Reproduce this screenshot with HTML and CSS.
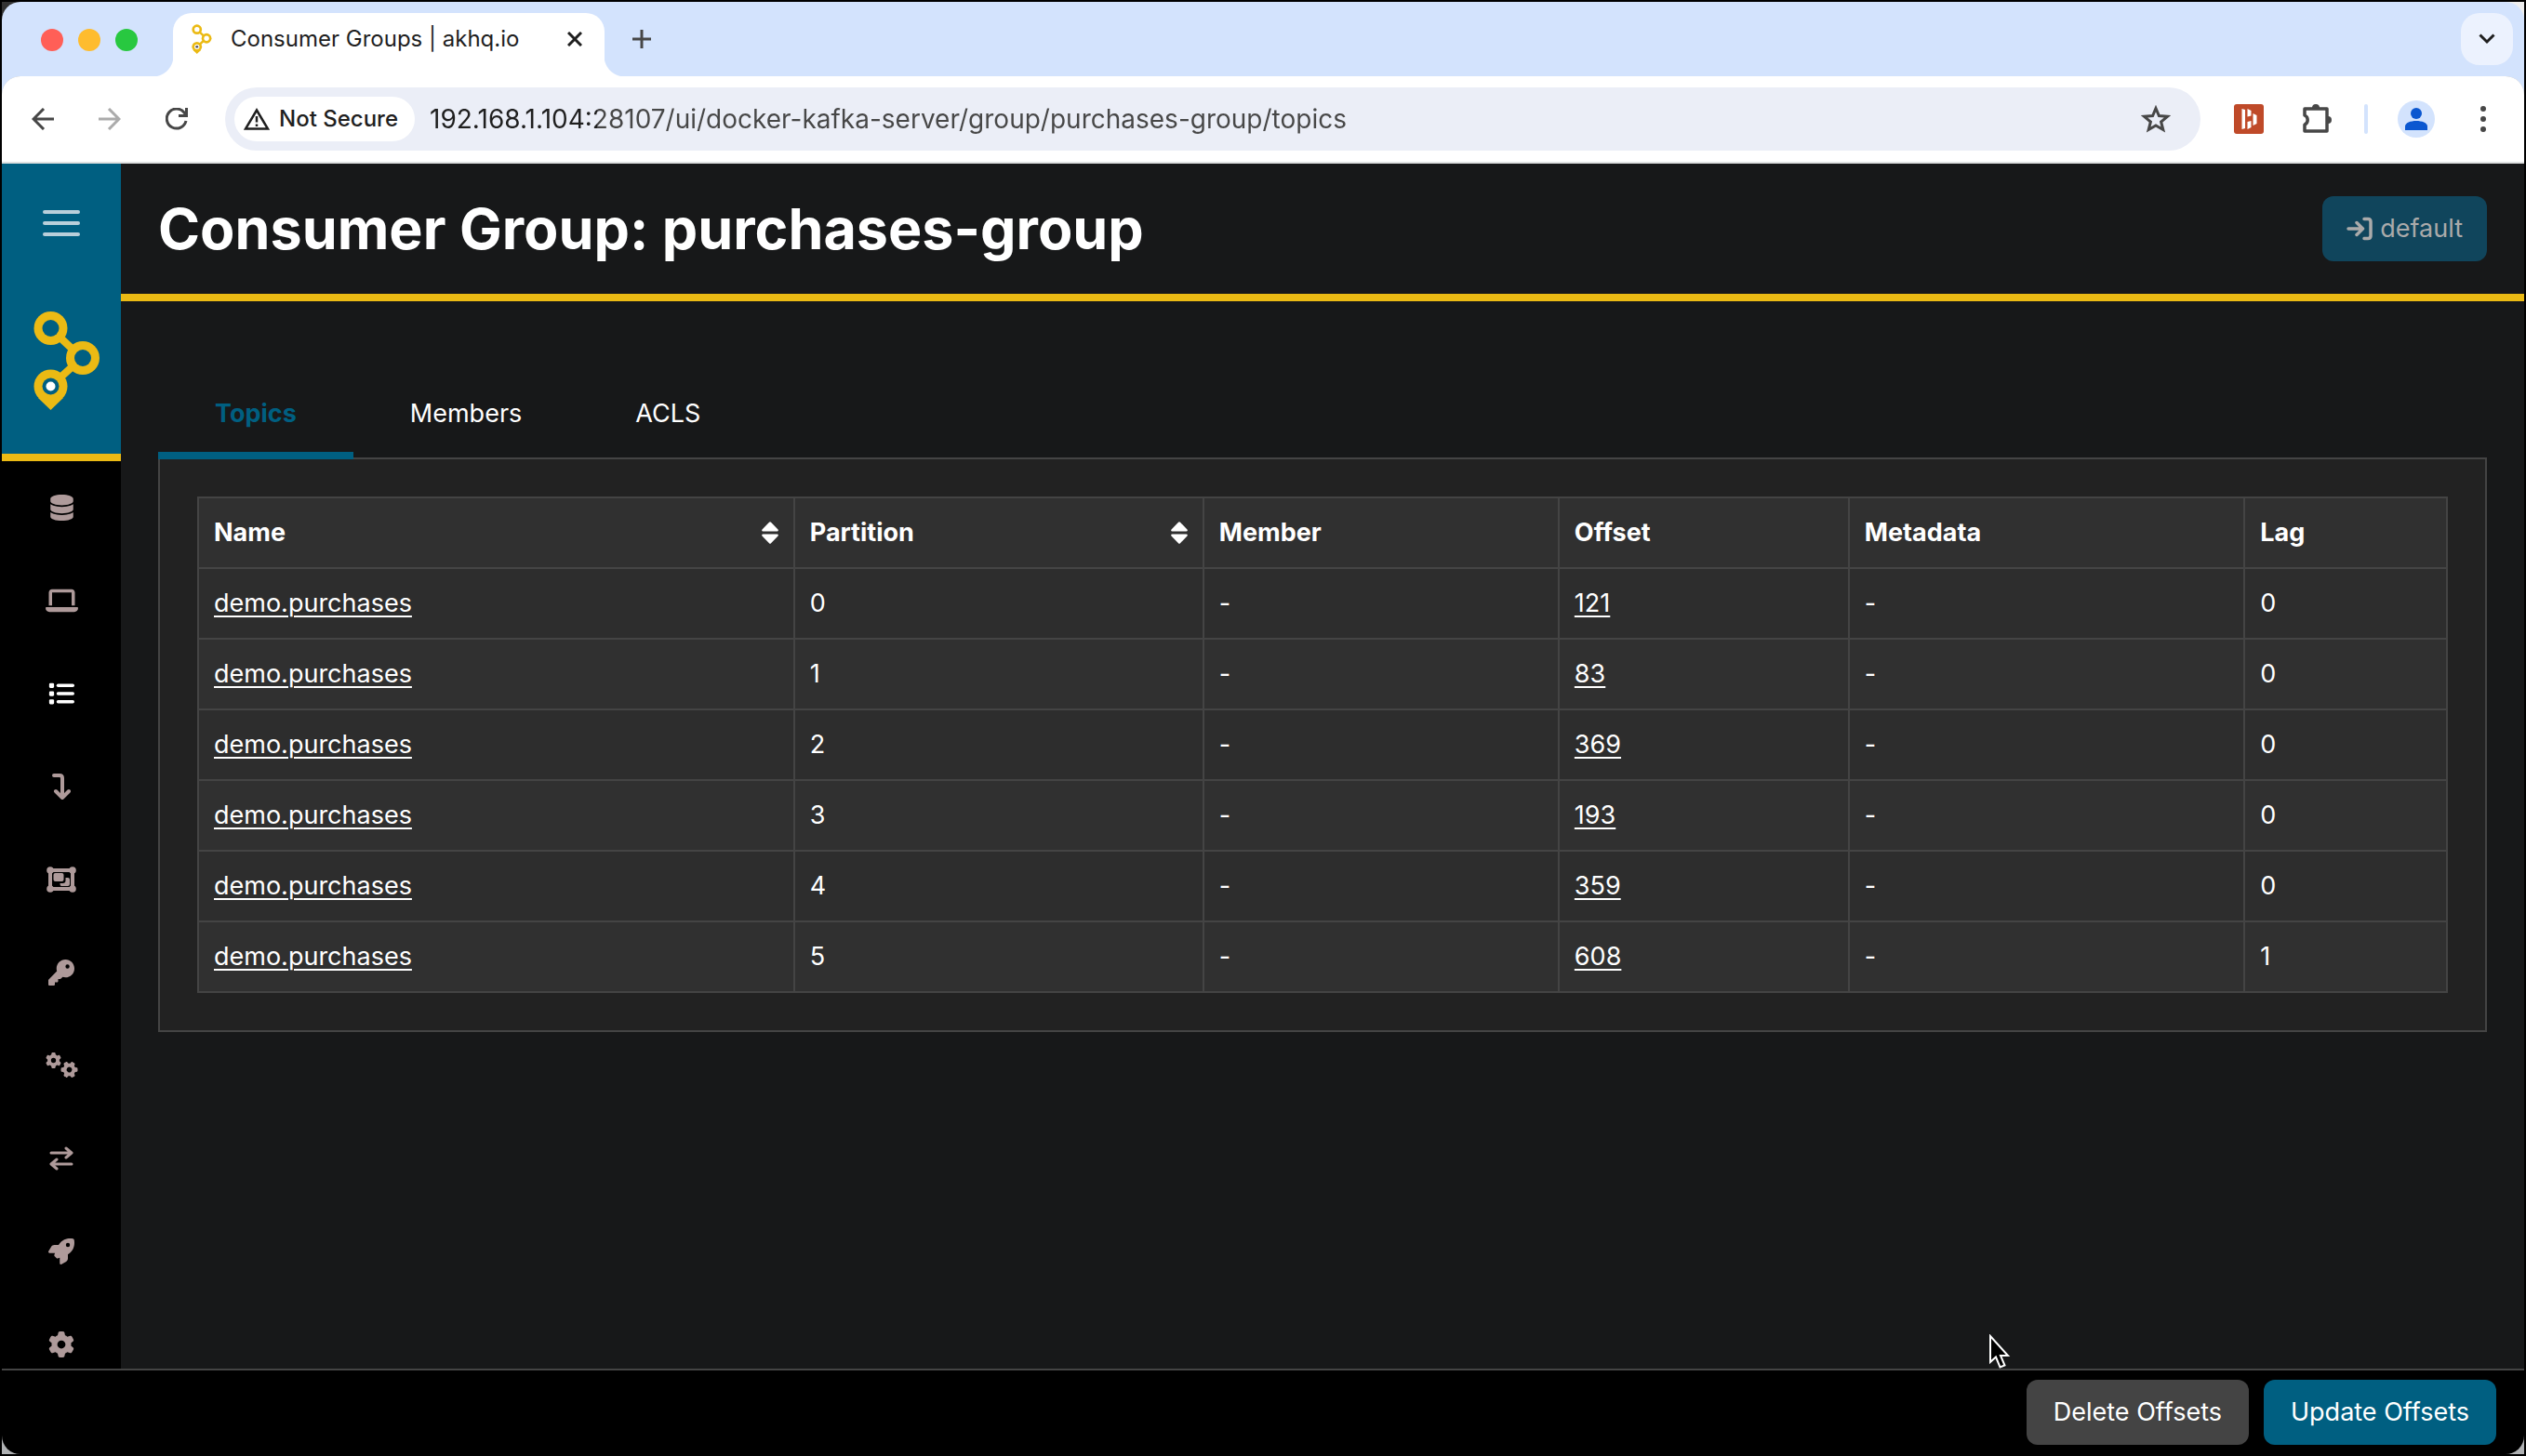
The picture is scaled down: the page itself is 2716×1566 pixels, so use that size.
FILE: index.html
```html
<!DOCTYPE html>
<html lang="en">
<head>
<meta charset="utf-8">
<title>Consumer Groups | akhq.io</title>
<link rel="stylesheet" href="styles.css">
</head>
<body>
<svg class="defs" width="0" height="0" aria-hidden="true">
  <symbol id="logo" viewBox="36 333 72 107">
    <path d="M54 352 88 384 54 415" fill="none" stroke="#ebba14" stroke-width="8"/>
    <path d="M41 427 54.500 440 68 427Z" fill="#ebba14"/>
    <g fill="#ebba14"><circle cx="54.500" cy="352" r="18"/><circle cx="89" cy="384" r="18"/><circle cx="54.500" cy="414.500" r="18"/></g>
    <g class="hole"><circle cx="54.500" cy="352" r="9"/><circle cx="89" cy="384" r="9"/><circle cx="54.500" cy="414.500" r="9"/></g>
    <circle class="dot" cx="54.500" cy="414.500" r="5"/>
  </symbol>
  <symbol id="gear" viewBox="0 0 512 512"><path d="M495.9 166.6c3.2 8.7 .5 18.4-6.4 24.6l-43.3 39.4c1.1 8.3 1.7 16.8 1.700 25.4s-.6 17.1-1.700 25.4l43.3 39.4c6.900 6.200 9.600 15.9 6.400 24.6c-4.400 11.9-9.700 23.3-15.800 34.3l-4.700 8.100c-6.600 11-14 21.4-22.100 31.2c-5.900 7.200-15.700 9.600-24.500 6.800l-55.700-17.700c-13.400 10.300-28.200 18.900-44 25.400l-12.500 57.100c-2 9.100-9 16.300-18.200 17.800c-13.800 2.300-28 3.500-42.500 3.500s-28.700-1.200-42.500-3.500c-9.200-1.500-16.200-8.700-18.200-17.800l-12.500-57.100c-15.800-6.500-30.600-15.100-44-25.400L83.100 425.900c-8.800 2.800-18.600 .3-24.500-6.800c-8.100-9.800-15.500-20.200-22.100-31.200l-4.700-8.100c-6.100-11-11.400-22.400-15.800-34.300c-3.200-8.700-.5-18.400 6.400-24.600l43.300-39.400C64.600 273.100 64 264.600 64 256s.6-17.100 1.700-25.400L22.400 191.200c-6.900-6.200-9.600-15.900-6.400-24.600c4.400-11.900 9.700-23.300 15.800-34.300l4.700-8.100c6.600-11 14-21.400 22.100-31.200c5.900-7.200 15.700-9.600 24.500-6.800l55.700 17.700c13.400-10.300 28.200-18.900 44-25.400l12.500-57.100c2-9.100 9-16.300 18.200-17.800C227.300 1.200 241.500 0 256 0s28.700 1.200 42.500 3.500c9.200 1.500 16.200 8.700 18.200 17.800l12.500 57.100c15.800 6.500 30.600 15.100 44 25.400l55.700-17.700c8.800-2.800 18.600-.3 24.500 6.800c8.100 9.800 15.500 20.200 22.100 31.200l4.700 8.100c6.100 11 11.400 22.400 15.800 34.300zM256 336a80 80 0 1 0 0-160 80 80 0 1 0 0 160z"/></symbol>
  <symbol id="sort" viewBox="0 0 18 24"><path d="M8 .8Q9-.4 10 .8L17.500 8.600Q18.500 10.400 16.500 10.600H1.500Q-.5 10.400 .5 8.600ZM1.500 13.400H16.500Q18.500 13.600 17.500 15.400L10 23.200Q9 24.400 8 23.200L.5 15.400Q-.5 13.600 1.500 13.400Z"/></symbol>
</svg>
<div class="window">
  <header class="tabstrip">
    <div class="lights"><i class="red"></i><i class="amber"></i><i class="green"></i></div>
    <div class="browser-tab">
      <svg class="favicon" width="22" height="32"><use href="#logo"/></svg>
      <span class="tab-title">Consumer Groups | akhq.io</span>
      <button class="icon-btn close" aria-label="Close tab"><svg width="16" height="16" viewBox="0 0 16 16"><path d="M1 1 15 15M15 1 1 15" stroke="#1f1f1f" stroke-width="3"/></svg></button>
    </div>
    <button class="icon-btn new-tab" aria-label="New tab"><svg width="20" height="20" viewBox="0 0 20 20"><path d="M10 0V20M0 10H20" stroke="#474747" stroke-width="3"/></svg></button>
    <button class="icon-btn tab-search" aria-label="Search tabs"><svg width="18" height="12" viewBox="0 0 18 12"><path d="M1.500 1.500 9 9 16.500 1.500" fill="none" stroke="#1f1f1f" stroke-width="3"/></svg></button>
  </header>
  <nav class="toolbar" aria-label="Browser">
    <button class="icon-btn history" aria-label="Back"><svg width="24" height="24" viewBox="0 0 24 24"><path d="M24 12H2M13 1 2 12 13 23" fill="none" stroke="#474747" stroke-width="3"/></svg></button>
    <button class="icon-btn history" aria-label="Forward"><svg width="24" height="24" viewBox="0 0 24 24"><path d="M0 12H22M11 1 22 12 11 23" fill="none" stroke="#ababab" stroke-width="3"/></svg></button>
    <button class="icon-btn" aria-label="Reload"><svg width="24" height="24" viewBox="0 0 24 24"><path d="M22 14A10.500 10.500 0 1 1 20 5L22 8M22.500 0V8.500H14" fill="none" stroke="#474747" stroke-width="3"/></svg></button>
    <div class="omnibox">
      <button class="chip"><svg width="28" height="24" viewBox="0 0 28 24"><path d="M14 2.500 26 22.500H2ZM14 9V15.500M14 17.500V20" fill="none" stroke="#1f1f1f" stroke-width="2.500"/></svg>Not Secure</button>
      <input class="url" type="text" aria-label="Address" value="192.168.1.104:28107/ui/docker-kafka-server/group/purchases-group/topics">
      <button class="icon-btn" aria-label="Bookmark"><svg width="32" height="30" viewBox="0 0 32 30"><path d="M16 3.500 19.400 11.500 28.500 12.300 21.600 18 23.800 26.500 16 22 8.200 26.500 10.400 18 3.500 12.300 12.600 11.500Z" fill="none" stroke="#474747" stroke-width="3"/></svg></button>
    </div>
    <button class="icon-btn extension" aria-label="Extension"><svg width="32" height="32" viewBox="0 0 32 32"><rect width="32" height="32" rx="3" fill="#bf4a29"/><path d="M8.500 5 12 6V26L8.500 27ZM14.500 5 18.500 7V12.500L14.500 13.500ZM14.500 19 18.500 18V25L14.500 27ZM20.500 10 24.500 12V21L20.500 23Z" fill="#fff"/></svg></button>
    <button class="icon-btn puzzle" aria-label="Extensions"><svg width="32" height="34" viewBox="0 0 32 34"><path d="M2 6H26V30H2V23A5.500 5.500 0 0 0 2 13Z" fill="none" stroke="#474747" stroke-width="3.500" stroke-linejoin="round"/><path d="M10 5A4 4 0 0 1 18 5ZM27 14A4 4 0 0 1 27 22Z" fill="#474747"/></svg></button>
    <span class="divider"></span>
    <button class="icon-btn profile" aria-label="Profile"><svg width="40" height="40" viewBox="0 0 40 40"><circle cx="20" cy="20" r="20" fill="#d3e3fd"/><circle cx="20" cy="14" r="6" fill="#0b57d0"/><path d="M8 32V28C8 20 32 20 32 28V32Z" fill="#0b57d0"/></svg></button>
    <button class="icon-btn" aria-label="Menu"><svg width="8" height="30" viewBox="0 0 8 30" fill="#474747"><circle cx="4" cy="4" r="3"/><circle cx="4" cy="15" r="3"/><circle cx="4" cy="26" r="3"/></svg></button>
  </nav>

  <div class="app">
    <aside class="sidebar">
      <div class="brand">
        <button class="icon-btn" aria-label="Toggle menu"><svg width="40" height="28" viewBox="0 0 40 28" fill="#b9cfda"><rect width="40" height="4" rx="2"/><rect y="12" width="40" height="4" rx="2"/><rect y="24" width="40" height="4" rx="2"/></svg></button>
        <a href="#" class="brand-logo" aria-label="AKHQ"><svg width="72" height="107"><use href="#logo"/></svg></a>
      </div>
      <nav class="menu" aria-label="Main">
        <a href="#" aria-label="Clusters"><svg width="25" height="28" viewBox="0 0 448 512"><path d="M448 80v48c0 44.200-100.300 80-224 80S0 172.200 0 128V80C0 35.800 100.300 0 224 0S448 35.800 448 80zM393.200 214.700c20.800-7.400 39.900-16.900 54.800-28.600V288c0 44.200-100.300 80-224 80S0 332.200 0 288V186.100c14.900 11.800 34 21.200 54.800 28.600C99.700 230.700 159.500 240 224 240s124.300-9.300 169.200-25.300zM0 346.100c14.900 11.800 34 21.200 54.800 28.600C99.700 390.700 159.500 400 224 400s124.300-9.300 169.200-25.300c20.800-7.400 39.900-16.900 54.800-28.600V432c0 44.200-100.300 80-224 80S0 476.200 0 432V346.100z"/></svg></a>
        <a href="#" aria-label="Nodes"><svg width="35" height="28" viewBox="0 0 640 512"><path d="M128 32C92.700 32 64 60.700 64 96V352h64V96H512V352h64V96c0-35.300-28.700-64-64-64H128zM19.200 384C8.600 384 0 392.600 0 403.200C0 445.600 34.400 480 76.800 480H563.200c42.400 0 76.800-34.400 76.800-76.800c0-10.600-8.600-19.200-19.200-19.200H19.200z"/></svg></a>
        <a href="#" class="active" aria-label="Consumer Groups"><svg width="28" height="28" viewBox="0 0 512 512"><rect x="16" y="48" width="96" height="96" rx="24"/><rect x="16" y="208" width="96" height="96" rx="24"/><rect x="16" y="368" width="96" height="96" rx="24"/><rect x="160" y="64" width="352" height="64" rx="32"/><rect x="160" y="224" width="352" height="64" rx="32"/><rect x="160" y="384" width="352" height="64" rx="32"/></svg></a>
        <a href="#" aria-label="Topics"><svg width="20" height="28" viewBox="0 0 20 28"><path d="M2 2H8Q11 2 11 5V26M4 19 11 26 18 19" class="line"/></svg></a>
        <a href="#" aria-label="ACLs"><svg width="32" height="28" viewBox="0 0 32 28"><path d="M4 4H28V24H4Z" class="line"/><circle cx="4" cy="4" r="3.800"/><circle cx="28" cy="4" r="3.800"/><circle cx="4" cy="24" r="3.800"/><circle cx="28" cy="24" r="3.800"/><rect x="7.500" y="7" width="11" height="9" rx="2"/><path d="M20.500 12H23Q25 12 25 14V19Q25 21 23 21H16Q14.500 21 14.500 18H17.500Q20.500 18 20.500 15Z"/></svg></a>
        <a href="#" aria-label="Schema Registry"><svg width="28" height="28" viewBox="0 0 512 512"><path d="M336 352c97.200 0 176-78.800 176-176S433.200 0 336 0S160 78.800 160 176c0 18.700 2.900 36.800 8.300 53.700L7 391c-4.500 4.500-7 10.600-7 17v80c0 13.300 10.700 24 24 24h80c13.300 0 24-10.700 24-24V448h40c13.300 0 24-10.700 24-24V384h40c6.400 0 12.500-2.500 17-7l33.300-33.300c16.900 5.400 35 8.300 53.700 8.300zM376 96a40 40 0 1 1 0 80 40 40 0 1 1 0-80z"/></svg></a>
        <a href="#" aria-label="Connects"><svg width="35" height="28" viewBox="0 0 35 28"><use href="#gear" width="17" height="17"/><g transform="rotate(30 25.500 18.500)"><use href="#gear" x="16.500" y="9.500" width="18" height="18"/></g></svg></a>
        <a href="#" aria-label="KsqlDB"><svg width="26" height="28" viewBox="0 0 26 28"><path d="M2 8H24M18 3 24 8 18 13M24 20H2M8 15 2 20 8 25" class="line thin"/></svg></a>
        <a href="#" aria-label="Deployments"><svg width="28" height="28" viewBox="0 0 512 512"><path d="M156.600 384.900L125.700 354c-8.500-8.500-11.500-20.800-7.700-32.200c3-8.900 7-20.500 11.800-33.800L24 288c-8.600 0-16.600-4.600-20.900-12.100s-4.200-16.700 .2-24.100l52.500-88.500c13-21.900 36.500-35.300 61.900-35.300l82.300 0c2.400-4 4.800-7.700 7.200-11.300C289.100-4.100 411.100-8.100 483.900 5.300c11.600 2.100 20.600 11.200 22.800 22.800c13.400 72.900 9.300 194.800-111.400 276.700c-3.500 2.400-7.300 4.800-11.300 7.200v82.300c0 25.400-13.400 49-35.300 61.900l-88.500 52.500c-7.400 4.400-16.600 4.500-24.100 .2s-12.100-12.200-12.100-20.900V380.800c-14.100 4.900-26.400 8.900-35.700 11.900c-11.200 3.600-23.400 .5-31.800-7.800zM384 168a40 40 0 1 0 0-80 40 40 0 1 0 0 80z"/></svg></a>
        <a href="#" aria-label="Settings"><svg width="28" height="28"><use href="#gear"/></svg></a>
      </nav>
    </aside>

    <main class="content">
      <div class="page-head">
        <h1>Consumer Group: purchases-group</h1>
        <button class="btn btn-login"><svg width="28" height="26" viewBox="0 0 28 26"><path d="M2 13H17M11 6.500 17.500 13 11 19.500M19 2.500H23Q26 2.500 26 5.500V20.500Q26 23.500 23 23.500H19" fill="none" stroke="#aaa" stroke-width="3.500" stroke-linecap="round" stroke-linejoin="round"/></svg>default</button>
      </div>
      <div class="page-body">
        <ul class="tabs">
          <li><a href="#" class="tab current">Topics</a></li>
          <li><a href="#" class="tab">Members</a></li>
          <li><a href="#" class="tab">ACLS</a></li>
        </ul>
        <section class="panel">
          <table class="grid">
            <colgroup><col class="c-name"><col class="c-part"><col class="c-member"><col class="c-offset"><col class="c-meta"><col></colgroup>
            <thead><tr>
              <th><div class="sortable">Name<svg width="18" height="24"><use href="#sort"/></svg></div></th>
              <th><div class="sortable">Partition<svg width="18" height="24"><use href="#sort"/></svg></div></th>
              <th>Member</th><th>Offset</th><th>Metadata</th><th>Lag</th>
            </tr></thead>
            <tbody>
              <tr><td><a href="#">demo.purchases</a></td><td>0</td><td>-</td><td><a href="#">121</a></td><td>-</td><td>0</td></tr>
              <tr><td><a href="#">demo.purchases</a></td><td>1</td><td>-</td><td><a href="#">83</a></td><td>-</td><td>0</td></tr>
              <tr><td><a href="#">demo.purchases</a></td><td>2</td><td>-</td><td><a href="#">369</a></td><td>-</td><td>0</td></tr>
              <tr><td><a href="#">demo.purchases</a></td><td>3</td><td>-</td><td><a href="#">193</a></td><td>-</td><td>0</td></tr>
              <tr><td><a href="#">demo.purchases</a></td><td>4</td><td>-</td><td><a href="#">359</a></td><td>-</td><td>0</td></tr>
              <tr><td><a href="#">demo.purchases</a></td><td>5</td><td>-</td><td><a href="#">608</a></td><td>-</td><td>1</td></tr>
            </tbody>
          </table>
        </section>
      </div>
    </main>
  </div>
  <footer class="actions">
    <button class="btn btn-secondary">Delete Offsets</button>
    <button class="btn btn-primary">Update Offsets</button>
  </footer>
</div>
<svg class="pointer" width="24" height="38" viewBox="0 0 24 38" aria-hidden="true"><path d="M2 2V30L8 24.500 12.500 35.500 17.500 33.500 13 23H21Z" fill="#000" stroke="#fff" stroke-width="2"/></svg>
</body>
</html>
```

FILE: styles.css
```css
* { box-sizing: border-box; }
html { background: #000; }
body {
  margin: 0;
  height: 100vh;
  border: 2px solid #000;
  background:
    linear-gradient(#333, #333) top left / 30px 30px no-repeat,
    linear-gradient(#eee, #eee) top right / 30px 30px no-repeat,
    #b0b2b4;
  color: #fff;
  font: 27px/42px Inter, "Liberation Sans", sans-serif;
}
button, input { font: inherit; border: 0; padding: 0; margin: 0; background: none; }
.defs { position: absolute; }
svg { display: block; flex: none; }
.icon-btn { display: grid; place-items: center; flex: none; }

.window {
  display: flex;
  flex-direction: column;
  height: 100%;
  border-radius: 20px;
  overflow: hidden;
}

/* browser chrome */
.tabstrip {
  display: flex;
  align-items: center;
  height: 80px;
  padding: 12px 12px 0 42px;
  background: #d3e3fd;
}
.lights { display: flex; gap: 16px; width: 142px; align-self: flex-start; padding-top: 17px; }
.lights i { width: 24px; height: 24px; border-radius: 50%; }
.red { background: #ff5f57; }
.amber { background: #febc2e; }
.green { background: #28c840; }
.browser-tab {
  position: relative;
  display: flex;
  align-items: center;
  width: 464px;
  height: 68px;
  padding: 0 24px 12px 20px;
  background: #fff;
  border-radius: 20px 20px 0 0;
  color: #1f1f1f;
  font-size: 24px;
}
.browser-tab::before, .browser-tab::after {
  content: "";
  position: absolute;
  bottom: 0;
  width: 22px;
  height: 22px;
}
.browser-tab::before { left: -22px; background: radial-gradient(circle at 0 0, transparent 22px, #fff 23px); }
.browser-tab::after { right: -22px; background: radial-gradient(circle at 100% 0, transparent 22px, #fff 23px); }
.favicon { margin-right: 20px; }
.tab-title { flex: 1; white-space: nowrap; }
.new-tab { margin: 0 0 12px 30px; }
.tab-search {
  width: 56px;
  height: 56px;
  margin: 0 0 12px auto;
  border-radius: 20px;
  background: #ecf2fe;
}
.toolbar {
  display: flex;
  align-items: center;
  gap: 32px;
  flex: none;
  height: 94px;
  padding: 0 40px 0 32px;
  background: linear-gradient(#fff, #fff) padding-box;
  border-bottom: 2px solid #dfe1e1;
  border-radius: 20px 20px 0 0;
  box-shadow: 0 -20px #d3e3fd;
  clip-path: inset(0);
}
.history { margin-right: 16px; }
.extension { margin-right: 10px; }
.puzzle { margin-right: 2px; }
.profile { margin-right: 16px; }
.omnibox {
  display: flex;
  align-items: center;
  flex: 1;
  height: 68px;
  padding: 0 32px 0 10px;
  margin: 0 4px 0 8px;
  border-radius: 34px;
  background: #ebeef7;
}
.chip {
  display: flex;
  align-items: center;
  gap: 10px;
  height: 48px;
  padding: 0 18px 0 10px;
  border-radius: 24px;
  background: #fff;
  color: #1f1f1f;
  font-size: 24px;
  font-weight: 500;
  white-space: nowrap;
}
.url {
  flex: 1;
  min-width: 0;
  margin-left: 16px;
  background: linear-gradient(90deg, #1f1f1f 180px, #474747 180px) text;
  color: transparent;
  font-size: 28px;
}
.divider { width: 4px; height: 32px; border-radius: 2px; background: #d3e3fd; }

/* application */
.app { display: flex; flex: 1; min-height: 0; overflow: hidden; background: #171819; }
.sidebar { width: 128px; flex: none; background: #000; }
.brand {
  display: flex;
  flex-direction: column;
  align-items: center;
  gap: 80px;
  height: 320px;
  padding-top: 50px;
  background: #005f81;
  border-bottom: 8px solid #ebba14;
}
.brand-logo { margin-left: 12px; --hole: #005f81; --dot: #fff; }
.favicon { --hole: #fff; --dot: #556; }
.hole { fill: var(--hole); }
.dot { fill: var(--dot); }
.menu a { display: grid; place-items: center; height: 100px; color: #ae9a9a; }
.menu a.active { color: #fff; }
.menu svg { fill: currentColor; }
.line { fill: none; stroke: currentColor; stroke-width: 4; stroke-linecap: round; stroke-linejoin: round; }
.thin { stroke-width: 3; }
.content { flex: 1; min-width: 0; }
.page-head {
  display: flex;
  align-items: center;
  justify-content: space-between;
  height: 148px;
  padding: 0 40px;
  border-bottom: 8px solid #ebba14;
}
h1 { margin: 0; font-size: 61px; line-height: 76px; font-weight: 700; }
.btn {
  display: flex;
  align-items: center;
  justify-content: center;
  gap: 8px;
  height: 70px;
  padding: 0 29px;
  border-radius: 12px;
  color: #fff;
  white-space: nowrap;
}
.btn-login { padding: 0 26px; background: #10455c; color: #aaa; }
.btn-secondary { background: #444; }
.btn-primary { background: #005f81; }
.page-body { padding: 80px 40px 0; }
.tabs { display: flex; margin: 0; padding: 0; list-style: none; }
.tab {
  display: block;
  padding: 20px 61px;
  height: 90px;
  color: #fff;
  text-decoration: none;
}
.tab.current { position: relative; border-bottom: 8px solid #005f81; color: #005f81; font-weight: 700; }
.panel { margin-top: -2px; padding: 40px; background: #222; border: 2px solid #444; }
.grid { width: 100%; table-layout: fixed; border-collapse: collapse; background: #303030; }
.c-name { width: 26.5%; }
.c-part { width: 18.2%; }
.c-member { width: 15.8%; }
.c-offset { width: 12.9%; }
.c-meta { width: 17.6%; }
.grid th, .grid td { height: 76px; padding: 0 16px; border: 2px solid #444; text-align: left; }
.grid th { font-weight: 700; }
.grid tbody tr:nth-child(odd) { background: #2d2d2d; }
.grid a { color: #fff; text-decoration: underline; text-decoration-thickness: 2px; text-underline-offset: 4px; }
.sortable { display: flex; align-items: center; justify-content: space-between; }
.sortable svg { fill: #fff; }
.actions {
  display: flex;
  flex: none;
  justify-content: flex-end;
  gap: 16px;
  height: 92px;
  padding: 10px 30px;
  background: #000;
  border-top: 2px solid #444;
}
.pointer { position: absolute; left: calc(100% - 578px); top: calc(100% - 131px); }
```
